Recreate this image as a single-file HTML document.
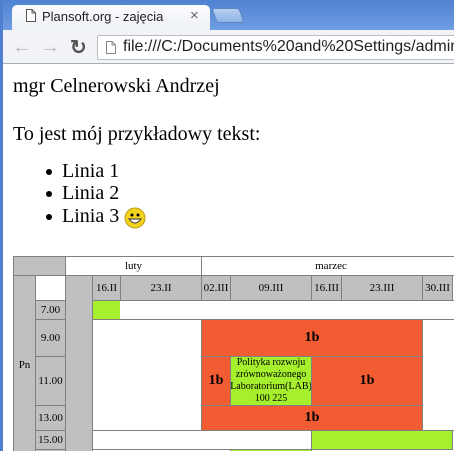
<!DOCTYPE html>
<html><head><meta charset="utf-8"><style>
*{margin:0;padding:0;box-sizing:border-box}
html,body{width:454px;height:451px;overflow:hidden}
body{position:relative;background:#fff;font-family:"Liberation Serif",serif}
.a{position:absolute}
.c{position:absolute;border:1px solid #808080;display:flex;align-items:center;justify-content:center;font-size:11px;text-align:center;line-height:12px}
.g{background:#c0c0c0}.o{background:#f15c33}.l{background:#a5ef2d}.w{background:#fff}
b{font-size:14px}
.li{position:absolute;left:62px;font-size:20px;white-space:nowrap}
.bu{position:absolute;left:46px;width:6px;height:6px;border-radius:50%;background:#000}
</style></head><body>
<div class="a" style="left:0;top:0;width:454px;height:30px;background:linear-gradient(#4f82d2,#6f9de3)"></div>
<div class="a" style="left:12px;top:5px;width:198px;height:26px;background:linear-gradient(#fafbfd,#eef1f5);border-radius:5px 5px 0 0"></div>
<div class="a" style="left:214px;top:8px;width:28px;height:15px;background:linear-gradient(#b9d0f0,#8fb2e6);border-radius:3px;transform:skewX(20deg);border:1px solid #5f86c2"></div>
<svg class="a" style="left:26px;top:9px" width="10" height="13"><path d="M.5 .5H6L9.5 4V12.5H.5Z M6 .5V4H9.5" fill="#fff" stroke="#555"/></svg>
<div class="a" style="left:42px;top:9px;font:13px 'Liberation Sans',sans-serif;color:#222">Plansoft.org - zajęcia</div>
<div class="a" style="left:190px;top:7px;font:15px 'Liberation Sans',sans-serif;color:#666">×</div>
<div class="a" style="left:0;top:30px;width:454px;height:34px;background:#f1f3f6"></div>
<div class="a" style="left:0;top:0;width:3px;height:451px;background:#4f7fcf"></div>
<div class="a" style="left:12px;top:36px;font:20px 'Liberation Sans',sans-serif;color:#bbb">←</div>
<div class="a" style="left:40px;top:36px;font:20px 'Liberation Sans',sans-serif;color:#bbb">→</div>
<div class="a" style="left:70px;top:35px;font:bold 20px 'Liberation Sans',sans-serif;color:#555">↻</div>
<div class="a" style="left:97px;top:35px;width:360px;height:25px;background:#fff;border:1px solid #b9bdc4;border-radius:2px"></div>
<svg class="a" style="left:106px;top:41px" width="10" height="13"><path d="M.5 .5H6L9.5 4V12.5H.5Z M6 .5V4H9.5" fill="#fff" stroke="#888"/></svg>
<div class="a" style="left:123px;top:38px;font:16px 'Liberation Sans',sans-serif;color:#222;white-space:nowrap">file:///C:/Documents%20and%20Settings/admin</div>
<div class="a" style="left:3px;top:63px;width:451px;height:1px;background:#a8acb3"></div>
<div class="a" style="left:13px;top:75px;font-size:20px;white-space:nowrap">mgr Celnerowski Andrzej</div>
<div class="a" style="left:13px;top:123px;font-size:20px;white-space:nowrap">To jest mój przykładowy tekst:</div>
<div class="bu" style="top:169px"></div><div class="li" style="top:160px">Linia 1</div>
<div class="bu" style="top:191px"></div><div class="li" style="top:182px">Linia 2</div>
<div class="bu" style="top:214px"></div><div class="li" style="top:205px">Linia 3</div>
<svg class="a" style="left:124px;top:207px" width="22" height="22"><circle cx="11" cy="11" r="10" fill="#f3d21f" stroke="#b79a10"/><circle cx="8" cy="8" r="1.5"/><circle cx="14" cy="8" r="1.5"/><path d="M5 12Q11 20 17 12Z" fill="#fff" stroke="#333"/></svg>
<div class="c g" style="left:13px;top:256px;width:53px;height:20px"></div>
<div class="c w" style="left:65px;top:256px;width:137px;height:20px">luty</div>
<div class="c w" style="left:201px;top:256px;width:260px;height:20px">marzec</div>
<div class="c g" style="left:13px;top:275px;width:23px;height:180px">Pn</div>
<div class="c w" style="left:35px;top:275px;width:31px;height:26px"></div>
<div class="c g" style="left:65px;top:275px;width:28px;height:180px"></div>
<div class="c g" style="left:92px;top:275px;width:29px;height:26px">16.II</div>
<div class="c g" style="left:120px;top:275px;width:82px;height:26px">23.II</div>
<div class="c g" style="left:201px;top:275px;width:30px;height:26px">02.III</div>
<div class="c g" style="left:230px;top:275px;width:82px;height:26px">09.III</div>
<div class="c g" style="left:311px;top:275px;width:31px;height:26px">16.III</div>
<div class="c g" style="left:341px;top:275px;width:82px;height:26px">23.III</div>
<div class="c g" style="left:422px;top:275px;width:31px;height:26px">30.III</div>
<div class="c g" style="left:35px;top:300px;width:31px;height:20px">7.00</div>
<div class="c g" style="left:35px;top:319px;width:31px;height:38px">9.00</div>
<div class="c g" style="left:35px;top:356px;width:31px;height:50px">11.00</div>
<div class="c g" style="left:35px;top:405px;width:31px;height:26px">13.00</div>
<div class="c g" style="left:35px;top:430px;width:31px;height:20px">15.00</div>
<div class="c g" style="left:35px;top:449px;width:31px;height:10px"></div>
<div class="c l" style="left:92px;top:300px;width:29px;height:20px"></div>
<div class="c w" style="left:120px;top:300px;width:340px;height:20px;border-left:0"></div>
<div class="c w" style="left:92px;top:319px;width:110px;height:112px;border-right:0"></div>
<div class="c o" style="left:201px;top:319px;width:222px;height:38px"><b>1b</b></div>
<div class="c o" style="left:201px;top:356px;width:30px;height:50px"><b>1b</b></div>
<div class="c l" style="left:230px;top:356px;width:82px;height:50px;font-size:10px">Polityka rozwoju zrównoważonego Laboratorium(LAB) 100 225</div>
<div class="c o" style="left:311px;top:356px;width:112px;height:50px"><b>1b</b></div>
<div class="c o" style="left:201px;top:405px;width:222px;height:26px"><b>1b</b></div>
<div class="c w" style="left:422px;top:319px;width:40px;height:112px"></div>
<div class="c w" style="left:92px;top:430px;width:220px;height:20px"></div>
<div class="c l" style="left:311px;top:430px;width:142px;height:20px"></div>
<div class="c l" style="left:230px;top:449px;width:82px;height:10px"></div>
</body></html>
